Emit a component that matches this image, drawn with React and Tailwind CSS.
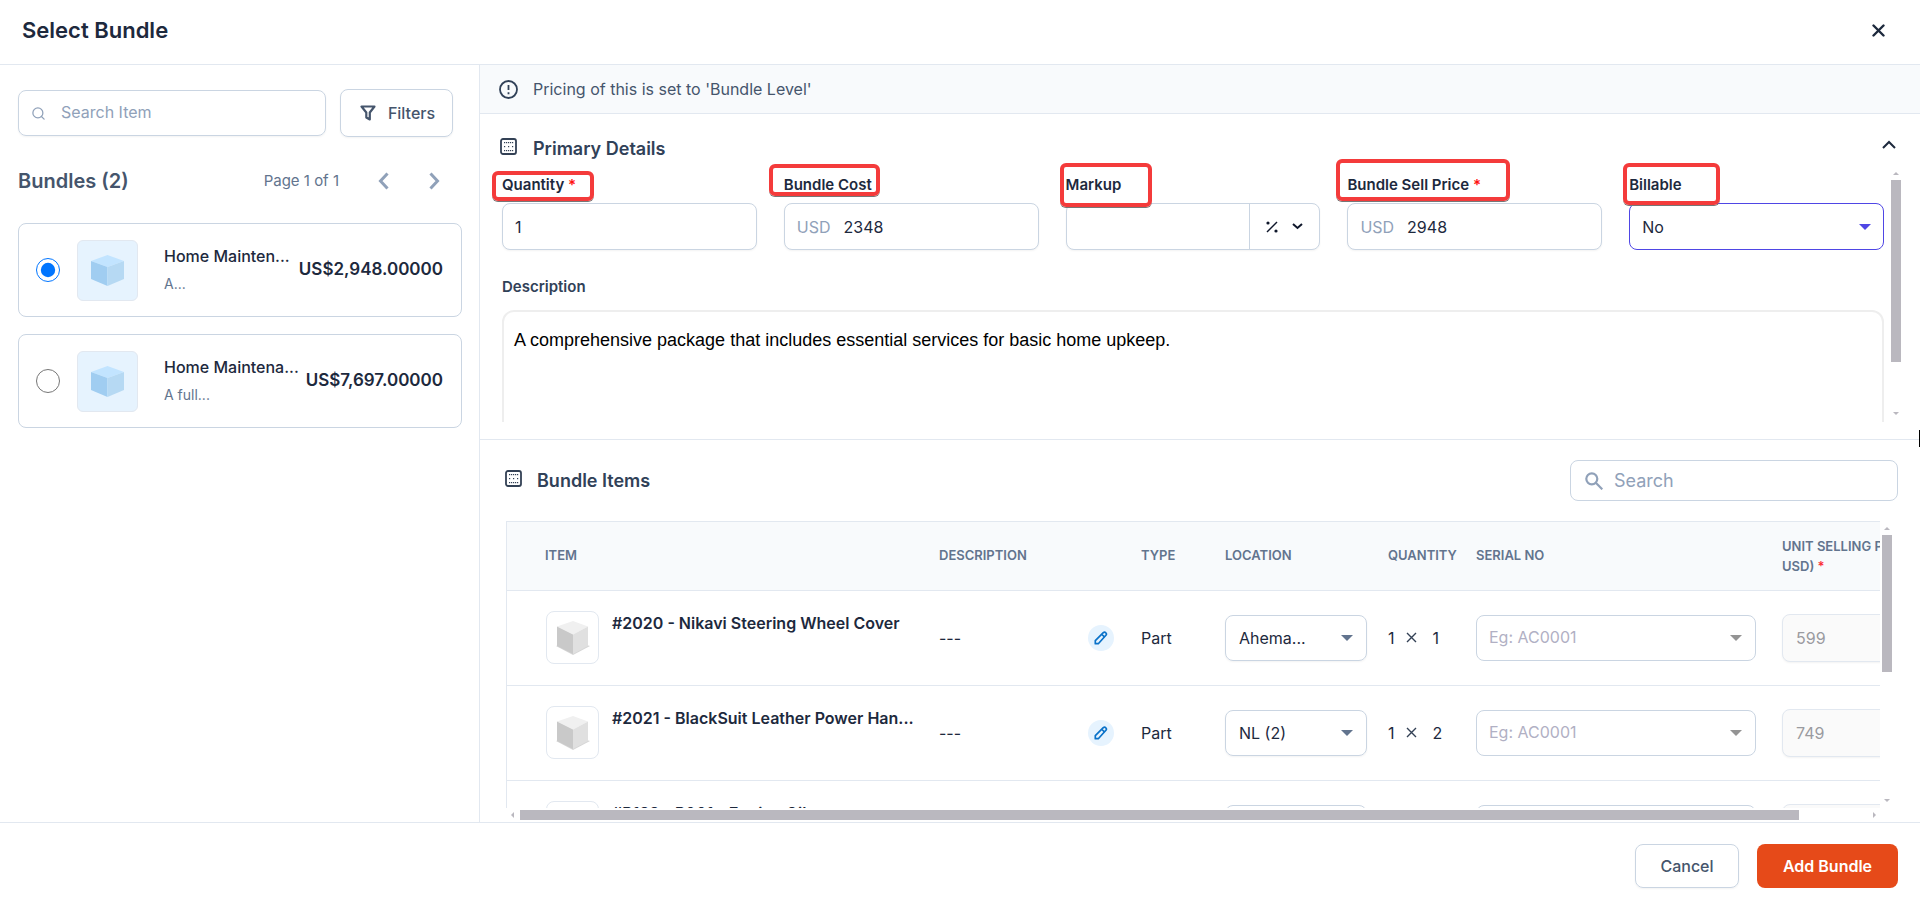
import { useState } from 'react'
import { LuSearch } from 'react-icons/lu'

const bundles = [
  { id: 1, name: 'Home Mainten...', summary: 'A...', price: 'US$2,948.00000' },
  { id: 2, name: 'Home Maintena...', summary: 'A full...', price: 'US$7,697.00000' },
]

const items = [
  { name: '#2020 - Nikavi Steering Wheel Cover', type: 'Part', location: 'Ahema...', quantity: 1, price: 599 },
  { name: '#2021 - BlackSuit Leather Power Han...', type: 'Part', location: 'NL (2)', quantity: 2, price: 749 },
  { name: '#P123 - P001 - Engine Oil', type: 'Part', location: 'NL (2)', quantity: 1, price: 120 },
]

const inputBox = 'h-[47px] w-full rounded-lg border border-slate-300 bg-white text-base text-slate-800 shadow-xs outline-none'

function Caret({ className }) {
  return (
    <svg className={className} width="12" height="6" viewBox="0 0 12 6" fill="currentColor" aria-hidden="true">
      <path d="M0 0h12L6 6z" />
    </svg>
  )
}

function BlockIcon() {
  return (
    <svg className="mb-1" width="17" height="17" viewBox="0 0 17 17" fill="none" aria-hidden="true">
      <rect x="1" y="1" width="15" height="15" rx="2" stroke="#334155" strokeWidth="1.8" />
      <g fill="#334155">
        {[4, 6, 8, 10, 12].map((x) => (
          <g key={x}>
            <rect x={x} y="4" width="1.2" height="1.2" />
            <rect x={x} y="12" width="1.2" height="1.2" />
          </g>
        ))}
        <rect x="4" y="8" width="1.2" height="1.2" />
        <rect x="8" y="8" width="1.2" height="1.2" />
        <rect x="12" y="8" width="1.2" height="1.2" />
      </g>
    </svg>
  )
}

function BlueCube() {
  return (
    <svg width="33" height="31" viewBox="0 0 33 31" aria-hidden="true">
      <path d="M16.500 0L33 6L16.500 12L0 6z" fill="#c2e4ff" />
      <path d="M0 6L16.500 12V31L0 24z" fill="#a0cdf1" />
      <path d="M33 6L16.500 12V31L33 24z" fill="#b6d9f3" />
    </svg>
  )
}

function GrayCube() {
  return (
    <svg width="34" height="34" viewBox="0 0 34 34" aria-hidden="true">
      <path d="M0 25L17 34L34 25L17 20z" fill="#d6d6d6" />
      <path d="M17 0L32 5.500L17 13.500L1 5.500z" fill="#f0f0f0" />
      <path d="M1 5.500L17 13.500V33L1 25z" fill="#c9c9c9" />
      <path d="M32 5.500L17 13.500V33L32 25z" fill="#e0e0e0" />
    </svg>
  )
}

function Mark({ className }) {
  return (
    <span
      className={`pointer-events-none absolute z-10 rounded-md border-4 border-[#f43b3b] shadow-[0_1px_0_#777] ${className}`}
    />
  )
}

function Field({ id, label, required, mark, children }) {
  return (
    <div>
      <div className="relative flex">
        <label htmlFor={id} className="text-[15px] leading-6 font-semibold text-slate-800">
          {label}
          {required && <span className="text-[#ff1010]"> *</span>}
        </label>
        <Mark className={mark} />
      </div>
      <div className="mt-[6px]">{children}</div>
    </div>
  )
}

function VerticalScrollbar({ thumb, className }) {
  return (
    <div className={`flex w-[10px] shrink-0 flex-col items-center text-[#bab8bf] ${className}`} aria-hidden="true">
      <svg width="6" height="3" viewBox="0 0 6 3" fill="currentColor">
        <path d="M0 3L3 0L6 3z" />
      </svg>
      <div className={`mt-[5px] w-full bg-[#bab8bf] ${thumb}`} />
      <svg className="mt-auto" width="6" height="3" viewBox="0 0 6 3" fill="currentColor">
        <path d="M0 0L3 3L6 0z" />
      </svg>
    </div>
  )
}

function BundleList() {
  const [selected, setSelected] = useState(1)

  return (
    <aside className="w-[480px] shrink-0 border-r border-slate-200 pt-6 pr-[17px] pl-[18px]">
      <div className="flex items-center gap-[14px] pr-[9px]">
        <div className="relative flex-1">
          <LuSearch className="absolute top-4 left-[13px] size-[15px] text-slate-400" />
          <input
            type="text"
            aria-label="Search Item"
            placeholder="Search Item"
            className="block h-[46px] w-full rounded-lg border border-slate-300 pr-3 pb-[2px] pl-[42px] text-base shadow-xs outline-none placeholder:text-slate-400"
          />
        </div>
        <button
          type="button"
          className="flex h-12 w-[113px] items-center justify-center gap-3 rounded-lg border border-slate-300 pl-[2px] text-base font-medium text-slate-600 shadow-xs"
        >
          <svg width="16" height="16" viewBox="0 0 16 16" fill="none" stroke="currentColor" strokeWidth="2.2" strokeLinejoin="round" aria-hidden="true">
            <path d="M1.500 1.500h13L9.800 7.500v7l-3.500-2V7.500z" />
          </svg>
          Filters
        </button>
      </div>

      <div className="mt-7 flex h-8 items-center">
        <h2 className="text-xl font-semibold text-slate-600">Bundles (2)</h2>
        <span className="ml-auto text-[15px] text-slate-500">Page 1 of 1</span>
        <button type="button" aria-label="Previous page" className="ml-[39px] text-slate-400">
          <svg width="11" height="18" viewBox="0 0 11 18" fill="none" stroke="currentColor" strokeWidth="3">
            <path d="M9.500 1.500L2.500 9l7 7.500" />
          </svg>
        </button>
        <button type="button" aria-label="Next page" className="mr-[22px] ml-10 text-slate-400">
          <svg width="11" height="18" viewBox="0 0 11 18" fill="none" stroke="currentColor" strokeWidth="3">
            <path d="M1.500 1.500L8.500 9l-7 7.500" />
          </svg>
        </button>
      </div>

      <div className="mt-[26px] flex flex-col gap-[17px]">
        {bundles.map((bundle) => (
          <label
            key={bundle.id}
            className="flex h-[94px] items-center rounded-lg border border-slate-300 pr-[18px] pl-[17px]"
          >
            <input
              type="radio"
              name="bundle"
              checked={selected === bundle.id}
              onChange={() => setSelected(bundle.id)}
              className="size-6 shrink-0"
            />
            <span className="ml-[17px] flex size-[61px] shrink-0 items-center justify-center rounded-md border border-slate-200 bg-[#e6f3fe]">
              <BlueCube />
            </span>
            <span className="ml-[26px] flex min-w-0 flex-1 flex-col gap-1 pb-px whitespace-nowrap">
              <span className="text-base leading-6 font-medium text-slate-800">{bundle.name}</span>
              <span className="text-sm leading-6 text-slate-500">{bundle.summary}</span>
            </span>
            <span className="text-[17px] font-semibold text-slate-800">{bundle.price}</span>
          </label>
        ))}
      </div>
    </aside>
  )
}

function PrimaryDetails() {
  const [quantity, setQuantity] = useState('1')
  const [cost, setCost] = useState('2348')
  const [sellPrice, setSellPrice] = useState('2948')

  return (
    <section className="border-b border-slate-200 pb-[17px]">
      <div className="flex h-11 items-center pt-6 pr-6 pl-5">
        <BlockIcon />
        <h2 className="ml-4 pt-[2px] text-lg leading-6 font-semibold text-slate-700">Primary Details</h2>
        <button type="button" aria-label="Collapse" className="ml-auto pb-2 text-slate-800">
          <svg width="14" height="9" viewBox="0 0 14 9" fill="none" stroke="currentColor" strokeWidth="2">
            <path d="M1 8l6-6 6 6" />
          </svg>
        </button>
      </div>

      <div className="flex pr-[19px]">
        <div className="h-[264px] min-w-0 flex-1 overflow-hidden pt-[15px] pr-[7px] pl-[22px]">
          <div className="grid grid-cols-5 gap-[27px]">
            <Field id="quantity" label="Quantity" required mark="-top-[2px] -left-[10px] h-[30px] w-[102px]">
              <input
                id="quantity"
                value={quantity}
                onChange={(e) => setQuantity(e.target.value)}
                className={`${inputBox} block px-3`}
              />
            </Field>
            <Field id="cost" label="Bundle Cost" mark="-top-[9px] -left-[15px] h-8 w-[111px]">
              <div className={`${inputBox} flex items-center gap-[13px] px-3`}>
                <span className="text-slate-400">USD</span>
                <input
                  id="cost"
                  value={cost}
                  onChange={(e) => setCost(e.target.value)}
                  className="w-full min-w-0 outline-none"
                />
              </div>
            </Field>
            <Field id="markup" label="Markup" mark="-top-[10px] -left-[6px] h-11 w-[92px]">
              <div className={`${inputBox} flex`}>
                <input id="markup" className="w-full min-w-0 flex-1 px-3 outline-none" />
                <button
                  type="button"
                  aria-label="Markup unit"
                  className="flex w-[70px] items-center justify-center gap-[14px] border-l border-slate-300 text-slate-900"
                >
                  <svg width="12" height="12" viewBox="0 0 12 12" aria-hidden="true">
                    <path d="M1 11L11 1" stroke="currentColor" strokeWidth="1.500" />
                    <circle cx="2" cy="2" r="1.600" fill="currentColor" />
                    <circle cx="10" cy="10" r="1.600" fill="currentColor" />
                  </svg>
                  <svg width="11" height="7" viewBox="0 0 11 7" fill="none" stroke="currentColor" strokeWidth="2" aria-hidden="true">
                    <path d="M1 1l4.500 4L10 1" />
                  </svg>
                </button>
              </div>
            </Field>
            <Field id="sell-price" label="Bundle Sell Price" required mark="-top-[14px] -left-[11px] h-[42px] w-[174px]">
              <div className={`${inputBox} flex items-center gap-[13px] px-3`}>
                <span className="text-slate-400">USD</span>
                <input
                  id="sell-price"
                  value={sellPrice}
                  onChange={(e) => setSellPrice(e.target.value)}
                  className="w-full min-w-0 outline-none"
                />
              </div>
            </Field>
            <Field id="billable" label="Billable" mark="-top-[10px] -left-[6px] h-[42px] w-[97px]">
              <div className="relative">
                <select
                  id="billable"
                  defaultValue="No"
                  className="block h-[47px] w-full appearance-none rounded-lg border border-[#4f46e5] bg-white px-3 text-base text-slate-800 outline-none"
                >
                  <option>No</option>
                  <option>Yes</option>
                </select>
                <Caret className="pointer-events-none absolute top-[21px] right-[13px] text-[#4f46e5]" />
              </div>
            </Field>
          </div>

          <label htmlFor="description" className="mt-[25px] block text-[15px] leading-6 font-semibold text-slate-700">
            Description
          </label>
          <textarea
            id="description"
            rows={6}
            defaultValue="A comprehensive package that includes essential services for basic home upkeep."
            className="mt-[11px] block w-full resize-none rounded-xl border-2 border-[#eeeeee] px-[10px] py-4 font-['Liberation_Sans',Arial,sans-serif] text-lg leading-6 text-black outline-none"
          />
        </div>
        <VerticalScrollbar thumb="h-[182px]" className="pt-[14px] pb-[7px]" />
      </div>
    </section>
  )
}

function ItemRow({ item, index }) {
  return (
    <tr className="h-[95px] border-b border-slate-200">
      <td className="pl-[39px]">
        <div className="flex">
          <span className="flex size-[53px] shrink-0 items-center justify-center rounded-lg border border-slate-200">
            <GrayCube />
          </span>
          <span className="ml-[13px] text-base leading-6 font-semibold whitespace-nowrap text-slate-800">
            {item.name}
          </span>
        </div>
      </td>
      <td className="pr-[27px]">
        <div className="flex items-center justify-between">
          <span>---</span>
          <button
            type="button"
            aria-label="Edit description"
            className="flex size-[26px] items-center justify-center rounded-full bg-[#e6f3fe] text-[#0a72c9]"
          >
            <svg width="14" height="14" viewBox="0 0 14 14" fill="none" stroke="currentColor" strokeWidth="1.700" strokeLinejoin="round">
              <path d="M1.300 12.700v-3L9.300 1.700q1.300-1 2.500.1t.1 2.500L4.300 12.700z" />
              <path d="M8 3.500l2.600 2.600" />
            </svg>
          </button>
        </div>
      </td>
      <td>{item.type}</td>
      <td>
        <div className="relative w-[142px]">
          <select
            aria-label={`Location ${index + 1}`}
            className="block h-[46px] w-full appearance-none rounded-lg border border-slate-300 px-[13px] text-base shadow-xs outline-none"
          >
            <option>{item.location}</option>
          </select>
          <Caret className="pointer-events-none absolute top-5 right-[14px] text-slate-500" />
        </div>
      </td>
      <td>
        <div className="flex items-center">
          <span>1</span>
          <svg className="ml-[11px]" width="11" height="11" viewBox="0 0 11 11" stroke="#334155" strokeWidth="1.400" aria-label="times">
            <path d="M1 1l9 9M10 1l-9 9" />
          </svg>
          <span className="ml-4">{item.quantity}</span>
        </div>
      </td>
      <td>
        <div className="relative w-[280px]">
          <input
            aria-label={`Serial number ${index + 1}`}
            placeholder="Eg: AC0001"
            className="block h-[46px] w-full rounded-lg border border-slate-300 px-3 pb-[2px] text-base outline-none placeholder:text-[#b1b0c4]"
          />
          <Caret className="pointer-events-none absolute top-5 right-[14px] text-[#949494]" />
        </div>
      </td>
      <td>
        <input
          aria-label={`Unit selling price ${index + 1}`}
          disabled
          defaultValue={item.price}
          className="block h-12 w-[200px] rounded-lg border border-slate-200 bg-[#fafafa] px-[13px] text-base text-[#9a9ba0] shadow-xs"
        />
      </td>
    </tr>
  )
}

function BundleItems() {
  return (
    <section className="flex min-h-0 flex-1 flex-col">
      <div className="flex items-center pt-5 pr-[22px] pl-[25px]">
        <BlockIcon />
        <h2 className="ml-[15px] text-lg leading-6 font-semibold text-slate-700">Bundle Items</h2>
        <div className="relative ml-auto">
          <svg
            className="absolute top-3 left-[15px] text-slate-400"
            width="18"
            height="18"
            viewBox="0 0 18 18"
            fill="none"
            stroke="currentColor"
            strokeWidth="2.200"
            aria-hidden="true"
          >
            <circle cx="6.800" cy="6.800" r="5.500" />
            <path d="M10.800 10.800l6.500 6.500" />
          </svg>
          <input
            type="text"
            aria-label="Search bundle items"
            placeholder="Search"
            className="block h-[41px] w-[328px] rounded-lg border border-slate-300 pr-3 pl-[43px] text-lg outline-none placeholder:text-slate-400"
          />
        </div>
      </div>

      <div className="mt-5 flex min-h-0 flex-1 pr-7 pl-[26px]">
        <div className="min-w-0 flex-1 overflow-hidden border-t border-l border-slate-200">
          <table className="w-[1555px] table-fixed border-collapse text-left text-base text-slate-800">
            <colgroup>
              <col className="w-[432px]" />
              <col className="w-[202px]" />
              <col className="w-[84px]" />
              <col className="w-[163px]" />
              <col className="w-[88px]" />
              <col className="w-[306px]" />
              <col className="w-[280px]" />
            </colgroup>
            <thead>
              <tr className="h-[68px] border-b border-slate-200 bg-slate-50 text-[13px] text-slate-500 uppercase">
                <th className="pl-[38px] font-semibold">Item</th>
                <th className="font-semibold">Description</th>
                <th className="font-semibold">Type</th>
                <th className="font-semibold">Location</th>
                <th className="font-semibold">Quantity</th>
                <th className="font-semibold">Serial No</th>
                <th className="leading-5 font-semibold">
                  Unit Selling Price (in
                  <br />
                  USD) <span className="text-red-500">*</span>
                </th>
              </tr>
            </thead>
            <tbody>
              {items.map((item, index) => (
                <ItemRow key={item.name} item={item} index={index} />
              ))}
            </tbody>
          </table>
        </div>
        <VerticalScrollbar thumb="h-[137px]" className="ml-[2px] pt-[6px] pb-[6px]" />
      </div>

      <div className="flex h-[14px] items-center pr-[44px] pl-[31px] text-[#bab8bf]" aria-hidden="true">
        <svg width="3" height="6" viewBox="0 0 3 6" fill="currentColor">
          <path d="M3 0L0 3L3 6z" />
        </svg>
        <div className="ml-[6px] h-[10px] flex-1 bg-[#bab8bf]" />
        <svg className="ml-[74px]" width="3" height="6" viewBox="0 0 3 6" fill="currentColor">
          <path d="M0 0L3 3L0 6z" />
        </svg>
      </div>
    </section>
  )
}

export default function App() {
  return (
    <div className="relative flex h-screen flex-col overflow-hidden bg-white font-['Inter',sans-serif]">
      <header className="flex h-[65px] shrink-0 items-center justify-between border-b border-slate-200 pr-[35px] pb-1 pl-[22px]">
        <h1 className="text-[22px] font-semibold text-slate-800">Select Bundle</h1>
        <button type="button" aria-label="Close" className="text-slate-800">
          <svg width="13" height="13" viewBox="0 0 13 13" stroke="currentColor" strokeWidth="2.400" strokeLinecap="round">
            <path d="M1.500 1.500l10 10M11.500 1.500l-10 10" />
          </svg>
        </button>
      </header>

      <div className="flex min-h-0 flex-1">
        <BundleList />
        <main className="flex min-w-0 flex-1 flex-col">
          <div className="flex h-[49px] shrink-0 items-center border-b border-slate-200 bg-slate-50 pl-[19px] text-slate-700">
            <svg width="19" height="19" viewBox="0 0 19 19" fill="none" stroke="currentColor" strokeWidth="1.800" aria-hidden="true">
              <circle cx="9.500" cy="9.500" r="8.500" />
              <path d="M9.500 5v5M9.500 12.200v2" />
            </svg>
            <p className="ml-[15px] text-base text-slate-600">Pricing of this is set to 'Bundle Level'</p>
          </div>
          <PrimaryDetails />
          <BundleItems />
        </main>
      </div>

      <footer className="flex h-[86px] shrink-0 items-center justify-end gap-[18px] border-t border-slate-200 pr-[22px]">
        <button
          type="button"
          className="h-11 w-[104px] rounded-lg border border-slate-300 text-base font-medium text-slate-600 shadow-xs"
        >
          Cancel
        </button>
        <button type="button" className="h-11 w-[141px] rounded-lg bg-[#e64a19] text-base font-semibold text-white">
          Add Bundle
        </button>
      </footer>

      <span className="absolute top-[430px] right-0 h-[17px] w-px bg-black" />
    </div>
  )
}
